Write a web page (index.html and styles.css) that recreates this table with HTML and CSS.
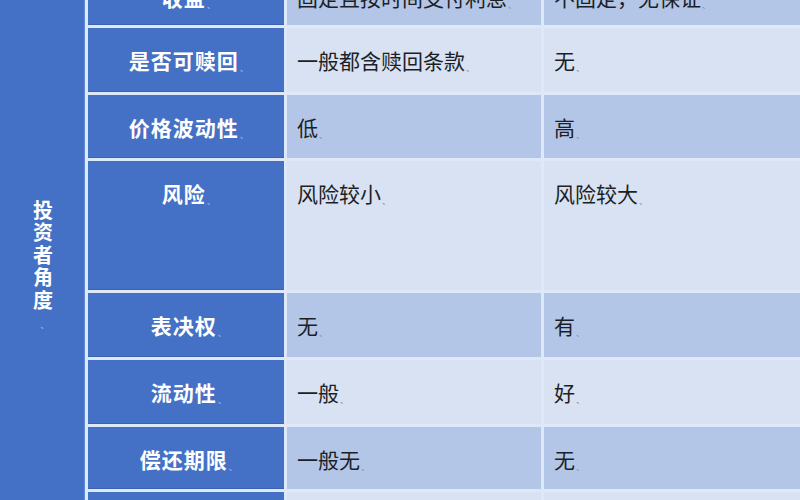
FILE: index.html
```html
<!DOCTYPE html>
<html lang="zh-CN">
<head>
<meta charset="utf-8">
<title>债券与股票对比</title>
<link rel="stylesheet" href="styles.css">
</head>
<body>
<table class="cmp">
  <colgroup>
    <col class="c-side">
    <col class="c-label">
    <col class="c-a">
    <col class="c-b">
  </colgroup>
  <tbody>
    <tr class="r-1 dark">
      <td class="side" rowspan="8"><div class="vtext">投资者角度<span class="mark">ˎ</span></div></td>
      <th>收益<span class="mark">ˎ</span></th>
      <td>固定且按时间支付利息<span class="mark">ˎ</span></td>
      <td>不固定，无保证<span class="mark">ˎ</span></td>
    </tr>
    <tr class="r-n light">
      <th>是否可赎回<span class="mark">ˎ</span></th>
      <td>一般都含赎回条款<span class="mark">ˎ</span></td>
      <td>无<span class="mark">ˎ</span></td>
    </tr>
    <tr class="r-3 dark">
      <th>价格波动性<span class="mark">ˎ</span></th>
      <td>低<span class="mark">ˎ</span></td>
      <td>高<span class="mark">ˎ</span></td>
    </tr>
    <tr class="r-tall light">
      <th>风险<span class="mark">ˎ</span></th>
      <td>风险较小<span class="mark">ˎ</span></td>
      <td>风险较大<span class="mark">ˎ</span></td>
    </tr>
    <tr class="r-n dark">
      <th>表决权<span class="mark">ˎ</span></th>
      <td>无<span class="mark">ˎ</span></td>
      <td>有<span class="mark">ˎ</span></td>
    </tr>
    <tr class="r-n light">
      <th>流动性<span class="mark">ˎ</span></th>
      <td>一般<span class="mark">ˎ</span></td>
      <td>好<span class="mark">ˎ</span></td>
    </tr>
    <tr class="r-7 dark">
      <th>偿还期限<span class="mark">ˎ</span></th>
      <td>一般无<span class="mark">ˎ</span></td>
      <td>无<span class="mark">ˎ</span></td>
    </tr>
    <tr class="r-8 light">
      <th>&nbsp;</th>
      <td>&nbsp;</td>
      <td>&nbsp;</td>
    </tr>
  </tbody>
</table>
</body>
</html>
```

FILE: styles.css
```css
html, body {
  margin: 0;
  padding: 0;
  width: 800px;
  height: 500px;
  overflow: hidden;
  background: #e4eefa;
}

body {
  font-family: "Noto Sans CJK SC", "Noto Sans", sans-serif;
}

.cmp {
  table-layout: fixed;
  border-collapse: separate;
  border-spacing: 3px;
  background: #dde9f8;
  margin: -38px 0 0 -3px;
  width: 824px;
}

.c-side { width: 85px; }
.c-label { width: 196px; }
.c-a { width: 254px; }
.c-b { width: 280px; }

.cmp th,
.cmp td {
  padding: 17px 10px 0 10px;
  vertical-align: top;
  font-size: 21px;
  line-height: 31px;
  white-space: nowrap;
  overflow: hidden;
}

.cmp th {
  background: #4471c5;
  color: #ffffff;
  font-weight: 700;
  text-align: center;
  padding-left: 0;
  padding-right: 0;
  letter-spacing: 1px;
  box-shadow: inset 0 -1px 0 #3a62ad;
}

.cmp td {
  color: #1c1f26;
  text-align: left;
}

.light td { background: #d9e2f2; }
.dark td { background: #b3c6e7; }

.cmp td.side {
  background: #4471c5;
  color: #ffffff;
  vertical-align: middle;
  text-align: center;
  padding: 24px 0 0 0;
  box-shadow: inset -1px 0 0 #5f8ad6;
}

.vtext {
  display: inline-block;
  writing-mode: vertical-rl;
  text-orientation: upright;
  font-size: 20px;
  font-weight: 700;
  letter-spacing: 2.5px;
  line-height: 22px;
}

.mark {
  font-size: 12px;
  color: #8a96a8;
  margin-left: 1px;
  font-weight: 400;
  letter-spacing: 0;
}

.cmp th .mark { color: #9fb6df; }
.vtext .mark { color: #9fb6df; }

.r-1 th, .r-1 td { height: 43px; }
.r-n th, .r-n td { height: 47px; }
.r-3 th, .r-3 td { height: 46px; }
.r-tall th, .r-tall td { height: 112px; }
.r-7 th, .r-7 td { height: 45px; }
.r-8 th, .r-8 td { height: 39px; }
```
